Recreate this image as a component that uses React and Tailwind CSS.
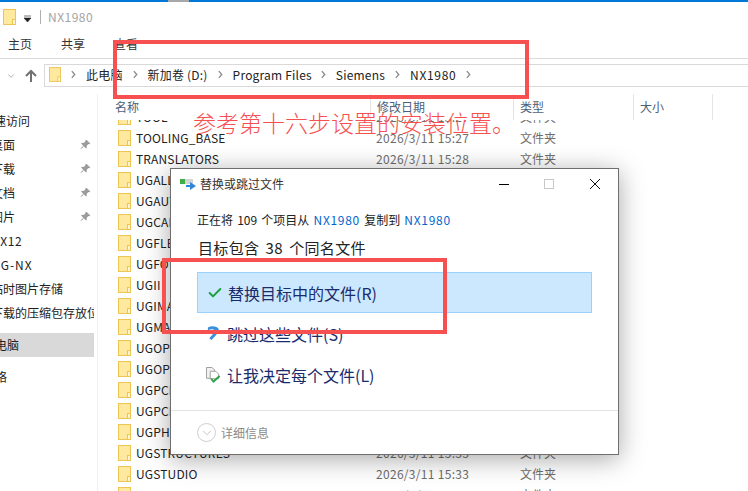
import React from 'react';
import { Check, ChevronDown } from 'lucide-react';

const rows = [
  { name: 'TOOL', date: '2026/3/11 15:27' },
  { name: 'TOOLING_BASE', date: '2026/3/11 15:27' },
  { name: 'TRANSLATORS', date: '2026/3/11 15:28' },
  { name: 'UGALLIANCE', date: '2026/3/11 15:28' },
  { name: 'UGAUTOMATION', date: '2026/3/11 15:28' },
  { name: 'UGCAM', date: '2026/3/11 15:29' },
  { name: 'UGFLEX', date: '2026/3/11 15:29' },
  { name: 'UGFORM', date: '2026/3/11 15:29' },
  { name: 'UGII', date: '2026/3/11 15:30' },
  { name: 'UGIMAN', date: '2026/3/11 15:31' },
  { name: 'UGMANAGER', date: '2026/3/11 15:31' },
  { name: 'UGOPEN', date: '2026/3/11 15:32' },
  { name: 'UGOPENPP', date: '2026/3/11 15:32' },
  { name: 'UGPCB', date: '2026/3/11 15:32' },
  { name: 'UGPCD', date: '2026/3/11 15:32' },
  { name: 'UGPHOTO', date: '2026/3/11 15:33' },
  { name: 'UGSTRUCTURES', date: '2026/3/11 15:33' },
  { name: 'UGSTUDIO', date: '2026/3/11 15:33' },
  { name: 'UGWEB', date: '2026/3/11 15:33' },
];

const sideItems = [
  { label: '快速访问', left: '-ml-[18px]' },
  { label: '桌面', left: '-ml-[9px]', pin: true },
  { label: '下载', left: '-ml-[9px]', pin: true },
  { label: '文档', left: '-ml-[9px]', pin: true },
  { label: '图片', left: '-ml-[9px]', pin: true },
  { label: 'NX12', left: '-ml-[9px] tracking-[0.6px]' },
  { label: 'UG-NX', left: '-ml-[9px] tracking-[1px]' },
  { label: '临时图片存储', left: '-ml-[9px]' },
  { label: '下载的压缩包存放位置', left: '-ml-[9px]' },
];

function Folder({ className }) {
  return (
    <svg viewBox="0 0 13 16" className={className}>
      <rect x=".5" y=".5" width="12" height="15" fill="#ffe99f" stroke="#eec555" />
      <rect x="9.5" y="10.5" width="3" height="5" fill="#fff6d0" stroke="#eec555" />
    </svg>
  );
}

function Pin() {
  return (
    <svg viewBox="0 0 12 12" className="w-[11px] h-[11px]">
      <path d="M7 .8l4.2 4.2-1.1.7-.8-.3-2 2 .2 2-.9.9-2.4-2.4-3 3 -.6-.6 3-3L1.2 5l.9-.9 2 .2 2-2-.3-.8z" fill="#9b9b9b" />
    </svg>
  );
}

function Crumb() {
  return (
    <svg viewBox="0 0 6 10" className="w-[5px] h-[9px] shrink-0">
      <path d="M1 1l3.5 4L1 9" fill="none" stroke="#8a8a8a" strokeWidth="1.6" />
    </svg>
  );
}

function Explorer() {
  return (
    <div className="flex flex-col h-full">
      <div className="h-[2px] bg-[#0078d7] shrink-0 flex">
        <div className="w-[168px]" />
        <div className="w-[21px] bg-[#a8a8a8]" />
      </div>
      <div className="h-[30px] flex items-center pl-[3px] shrink-0">
        <Folder className="w-[13px] h-[16px]" />
        <svg viewBox="0 0 8 8" className="w-[8px] h-[8px] ml-[8px] mt-[3px]">
          <path d="M0 1h7M0 3h7L3.5 7z" fill="#222" stroke="#222" strokeWidth=".6" />
        </svg>
        <div className="w-px h-[14px] bg-[#b0b0b0] ml-[8px]" />
        <span className="ml-[7px] text-[12px] text-[#a3a3a3] tracking-[0.5px]">NX1980</span>
      </div>
      <div className="h-[27px] pt-[3px] border-b border-[#dcdcdc] flex items-start pl-[8px] gap-[29px] text-[12px] text-[#333] shrink-0">
        <span>主页</span>
        <span>共享</span>
        <span>查看</span>
      </div>
      <div className="h-[33px] flex items-center shrink-0 pl-[6px]">
        <ChevronDown size={10} strokeWidth={2} className="text-[#a0a0a0]" />
        <svg viewBox="0 0 12 14" className="w-[12px] h-[14px] ml-[9px] mt-[1px]">
          <path d="M6 13V2M1 7l5-5 5 5" fill="none" stroke="#707070" strokeWidth="2" />
        </svg>
        <div className="flex-1 ml-[7px] h-[23px] border border-[#d9d9d9] border-r-0 flex items-center pl-[4px] pb-[2px] text-[12px] text-[#222] tracking-[0.2px] whitespace-nowrap">
          <Folder className="w-[12px] h-[15px]" />
          <div className="ml-[10px]"><Crumb /></div>
          <span className="ml-[10px]">此电脑</span>
          <div className="ml-[10px]"><Crumb /></div>
          <span className="ml-[10px]">新加卷 (D:)</span>
          <div className="ml-[10px]"><Crumb /></div>
          <span className="ml-[10px]">Program Files</span>
          <div className="ml-[9px]"><Crumb /></div>
          <span className="ml-[10px]">Siemens</span>
          <div className="ml-[10px]"><Crumb /></div>
          <span className="ml-[10px] tracking-[0.7px]">NX1980</span>
          <div className="ml-[10px]"><Crumb /></div>
        </div>
      </div>
      <div className="flex flex-1 min-h-0 mt-[2px]">
        <div className="w-[98px] shrink-0 border-r border-[#f0f0f0] overflow-hidden pt-[15px] text-[12px] text-[#222]">
          {sideItems.map((item) => (
            <div key={item.label} className="h-[24px] flex items-center relative w-[94px] overflow-hidden">
              <span className={`${item.left} whitespace-nowrap`}>{item.label}</span>
              {item.pin && (
                <span className="absolute right-[3px] top-[6px] bg-white"><Pin /></span>
              )}
            </div>
          ))}
          <div className="h-[24px] w-[94px] mt-[8px] bg-[#d9d9d9] flex items-center">
            <span className="-ml-[17px]">此电脑</span>
          </div>
          <div className="h-[24px] mt-[8px] flex items-center">
            <span className="-ml-[17px]">网络</span>
          </div>
        </div>
        <div className="flex-1 min-w-0 flex flex-col">
          <div className="h-[26px] shrink-0 flex text-[12px] text-[#4c607a]">
            <div className="w-[272px] pl-[17px] flex items-center">名称</div>
            <div className="w-[143px] border-l border-[#e5e5e5] pl-[6px] flex items-center">修改日期</div>
            <div className="w-[120px] border-l border-[#e5e5e5] pl-[6px] flex items-center">类型</div>
            <div className="w-[80px] border-x border-[#e5e5e5] pl-[6px] flex items-center">大小</div>
          </div>
          <div className="flex-1 overflow-hidden">
            <div className="-mt-[14px]">
              {rows.map((row) => (
                <div key={row.name} className="h-[21px] flex items-center text-[12px]">
                  <Folder className="w-[13px] h-[16px] ml-[20px] shrink-0" />
                  <span className="ml-[5px] w-[240px] text-[#222] tracking-[0.15px]">{row.name}</span>
                  <span className="w-[144px] text-[#6d6d6d] tracking-[0.3px]">{row.date}</span>
                  <span className="text-[#6d6d6d]">文件夹</span>
                </div>
              ))}
            </div>
          </div>
        </div>
      </div>
    </div>
  );
}

function Dialog() {
  return (
    <div className="absolute left-[170px] top-[168px] w-[449px] h-[287px] bg-white border border-[#6f6f6f] shadow-[0_4px_24px_rgba(0,0,0,0.35)] flex flex-col">
      <div className="h-[30px] flex items-center pl-[9px] shrink-0">
        <svg viewBox="0 0 16 12" className="w-[16px] h-[12px]">
          <rect x="0" y="1" width="5" height="5" fill="#3fae49" />
          <rect x="5" y="1" width="8" height="5" fill="#d4d4d4" />
          <path d="M6 7h4V4l6 4-6 4V9H6z" fill="#2f86d4" />
        </svg>
        <span className="ml-[4px] text-[12px] text-[#333]">替换或跳过文件</span>
        <div className="ml-auto flex items-center">
          <div className="w-[10px] h-px bg-black" />
          <div className="w-[10px] h-[10px] border border-[#c8c8c8] ml-[35px]" />
          <svg viewBox="0 0 10 10" className="w-[10px] h-[10px] ml-[36px] mr-[18px]">
            <path d="M0 0l10 10M10 0L0 10" stroke="#111" strokeWidth="1" />
          </svg>
        </div>
      </div>
      <div className="px-[26px] pt-[12px] text-[12px] text-[#222] leading-[18px] [word-spacing:1.5px] whitespace-nowrap">
        正在将 109 个项目从 <span className="text-[#0066cc] tracking-[0.7px]">NX1980</span> 复制到 <span className="text-[#0066cc] tracking-[0.7px]">NX1980</span>
      </div>
      <div className="pl-[27px] pt-[8px] text-[15px] leading-[22px] text-[#222] tracking-[0.35px] [word-spacing:2.5px] whitespace-nowrap">
        目标包含 38 个同名文件
      </div>
      <div className="mx-[26px] mt-[13px] h-[41px] bg-[#cce8ff] border border-[#99d1ff] flex items-center pl-[9px] text-[16px] text-[#1a2c6b]">
        <Check size={16} strokeWidth={3} className="text-[#1f9e3f]" />
        <span className="ml-[5px]">替换目标中的文件(R)</span>
      </div>
      <div className="mx-[26px] mt-[1px] h-[40px] flex items-center pl-[9px] text-[16px] text-[#1a2c6b]">
        <svg viewBox="0 0 16 18" className="w-[15px] h-[17px] -mt-[2px]">
          <path d="M2 2.5C6 .5 11 1 13 3.5c2 3-1 6-7 12.5L3.5 14c4-4.500 6.500-7 5.500-8.500C8 4 5 4.200 2 5.500z" fill="#3a8fdc" />
        </svg>
        <span className="ml-[6px]">跳过这些文件(S)</span>
      </div>
      <div className="mx-[26px] mt-[1px] h-[40px] flex items-center pl-[9px] text-[16px] text-[#1a2c6b]">
        <svg viewBox="0 0 16 17" className="w-[15px] h-[16px]">
          <path d="M.5.500h6l2.500 2.500v9H.5z" fill="#f2f2f2" stroke="#9a9a9a" />
          <path d="M4.500 4.500h6l3 3v5h-9z" fill="#fff" stroke="#9a9a9a" />
          <path d="M5.500 12.500l2.500 3 6.500-6" fill="none" stroke="#2fa14a" strokeWidth="2" />
        </svg>
        <span className="ml-[6px]">让我决定每个文件(L)</span>
      </div>
      <div className="mt-auto h-[44px] border-t border-[#e3e3e3] flex items-center pl-[26px] text-[12px] text-[#8a8a8a] shrink-0">
        <div className="w-[19px] h-[19px] rounded-full border border-[#cfcfcf] flex items-center justify-center">
          <ChevronDown size={14} strokeWidth={1.5} className="text-[#bdbdbd]" />
        </div>
        <span className="ml-[5px]">详细信息</span>
      </div>
    </div>
  );
}

export default function App() {
  return (
    <div className="relative w-[748px] h-[491px] overflow-hidden bg-white font-['Noto_Sans_CJK_SC','Noto_Sans',sans-serif]">
      <Explorer />
      <Dialog />
      {/* red annotations on top */}
      <div className="absolute left-[113px] top-[40px] w-[416px] h-[59px] border-[4px] border-[#f75050]" />
      <div className="absolute left-[193px] top-[105px] text-[23px] leading-[34px] text-[#f75050] font-light whitespace-nowrap">
        参考第十六步设置的安装位置。
      </div>
      <div className="absolute left-[162px] top-[258px] w-[285px] h-[76px] border-[4px] border-[#f75050]" />
    </div>
  );
}
